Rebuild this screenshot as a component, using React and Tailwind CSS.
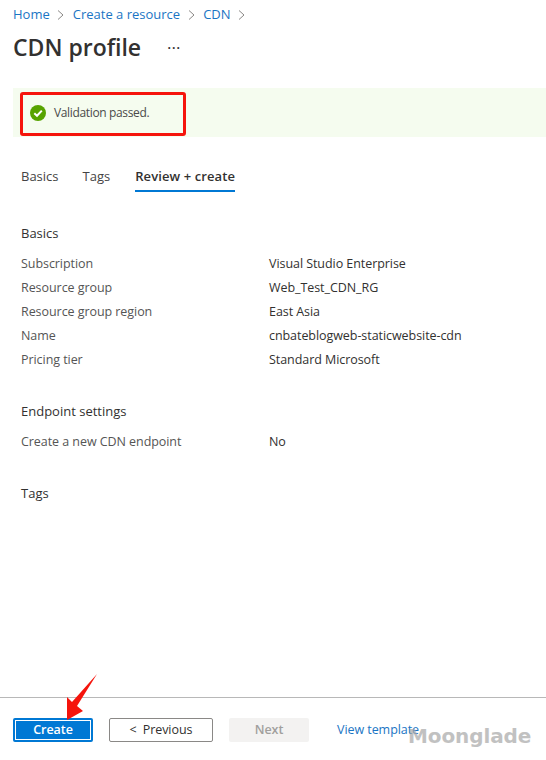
function Crumb({ children }) {
  return <span className="text-[#1a75c4]">{children}</span>;
}

function Chevron() {
  return (
    <svg width="8" height="12" viewBox="0 0 8 12" className="mx-[7.5px]" fill="none" stroke="#8a8886" strokeWidth="1">
      <path d="M1 1.5 L6 6 L1 10.5" />
    </svg>
  );
}

function Row({ label, value }) {
  return (
    <div className="flex h-[24px] items-center">
      <div className="w-[248px] text-[#555]">{label}</div>
      <div className="text-[#323130]">{value}</div>
    </div>
  );
}

export default function App() {
  return (
    <div className="relative flex h-[760px] w-[546px] flex-col overflow-hidden bg-white font-['Open_Sans','Noto_Sans',sans-serif] text-[12.5px] tracking-[-0.06px] text-[#323130]">
      <nav className="flex h-[29px] items-center pl-[13px] pt-[1px] text-[13px] tracking-[0px]">
        <Crumb>Home</Crumb>
        <Chevron />
        <Crumb>Create a resource</Crumb>
        <Chevron />
        <Crumb>CDN</Crumb>
        <Chevron />
      </nav>

      <header className="flex h-[36px] items-center pl-[13px]">
        <h1 className="text-[23px] font-semibold tracking-[0px] text-[#323130]">CDN profile</h1>
        <span className="ml-[26px] text-[17px] leading-none text-[#323130]">···</span>
      </header>

      <div className="relative ml-[13px] mt-[23px] flex h-[49px] items-center bg-[#f5fcef] pl-[17px] pt-[1px]">
        <svg width="16" height="16" viewBox="0 0 16 16">
          <circle cx="8" cy="8" r="8" fill="#57a300" />
          <path d="M4.3 8.3 L7 10.8 L11.8 5.6" fill="none" stroke="white" strokeWidth="2" />
        </svg>
        <span className="ml-[8px] text-[12px] tracking-[-0.35px] text-[#4a4a4a]">Validation passed.</span>
        <div className="absolute left-[7px] top-[4px] h-[44px] w-[166px] rounded-[3px] border-[3px] border-[#f5140c]" />
      </div>

      <div className="ml-[21px] mt-[22px] flex gap-[24px] text-[13px] tracking-[0px]">
        <div className="h-[33px] pt-[8px] text-[#444]">Basics</div>
        <div className="h-[33px] pt-[8px] text-[#444]">Tags</div>
        <div className="ml-[1px] h-[33px] border-b-2 border-[#0078d4] pt-[8px] font-semibold tracking-[0.1px]">Review + create</div>
      </div>

      <section className="ml-[21px] mt-[30px]">
        <h2 className="mb-[6px] flex h-[24px] items-center text-[13px] tracking-[0px]">Basics</h2>
        <Row label="Subscription" value="Visual Studio Enterprise" />
        <Row label="Resource group" value="Web_Test_CDN_RG" />
        <Row label="Resource group region" value="East Asia" />
        <Row label="Name" value="cnbateblogweb-staticwebsite-cdn" />
        <Row label="Pricing tier" value="Standard Microsoft" />
      </section>

      <section className="ml-[21px] mt-[28px]">
        <h2 className="mb-[6px] flex h-[24px] items-center text-[13px] tracking-[0px]">Endpoint settings</h2>
        <Row label="Create a new CDN endpoint" value="No" />
      </section>

      <section className="ml-[21px] mt-[28px]">
        <h2 className="flex h-[24px] items-center text-[13px] tracking-[0px]">Tags</h2>
      </section>

      <footer className="mt-auto flex h-[63px] items-start border-t border-[#b8b8b8] pl-[13px] pt-[20px]">
        <button className="flex h-[24px] w-[80px] items-center justify-center rounded-[2px] border-[2px] border-[#0078d4] bg-[#0078d4] font-semibold text-white outline outline-1 -outline-offset-[3px] outline-white">
          Create
        </button>
        <button className="ml-[16px] flex h-[24px] w-[104px] items-center justify-center gap-[6px] rounded-[2px] border border-[#8a8886] font-medium">
          <span className="font-normal">&lt;</span> Previous
        </button>
        <button className="ml-[16px] flex h-[24px] w-[80px] items-center justify-center rounded-[2px] bg-[#f3f2f1] font-semibold text-[#a19f9d]">
          Next
        </button>
        <a className="ml-[28px] flex h-[24px] items-center text-[#1a75c4]">View template</a>
      </footer>

      <div className="absolute left-[408px] top-[721px] font-['DejaVu_Sans',sans-serif] text-[20px] font-bold tracking-[-0.1px] text-[#a8a8a8] opacity-70">
        Moonglade
      </div>

      <svg className="absolute left-[60px] top-[670px]" width="40" height="54" viewBox="0 0 40 54">
        <path d="M37 4 L17 36 L23 41 L7 50 L7 27 L12 32 Z" fill="#f5140c" />
      </svg>
    </div>
  );
}
